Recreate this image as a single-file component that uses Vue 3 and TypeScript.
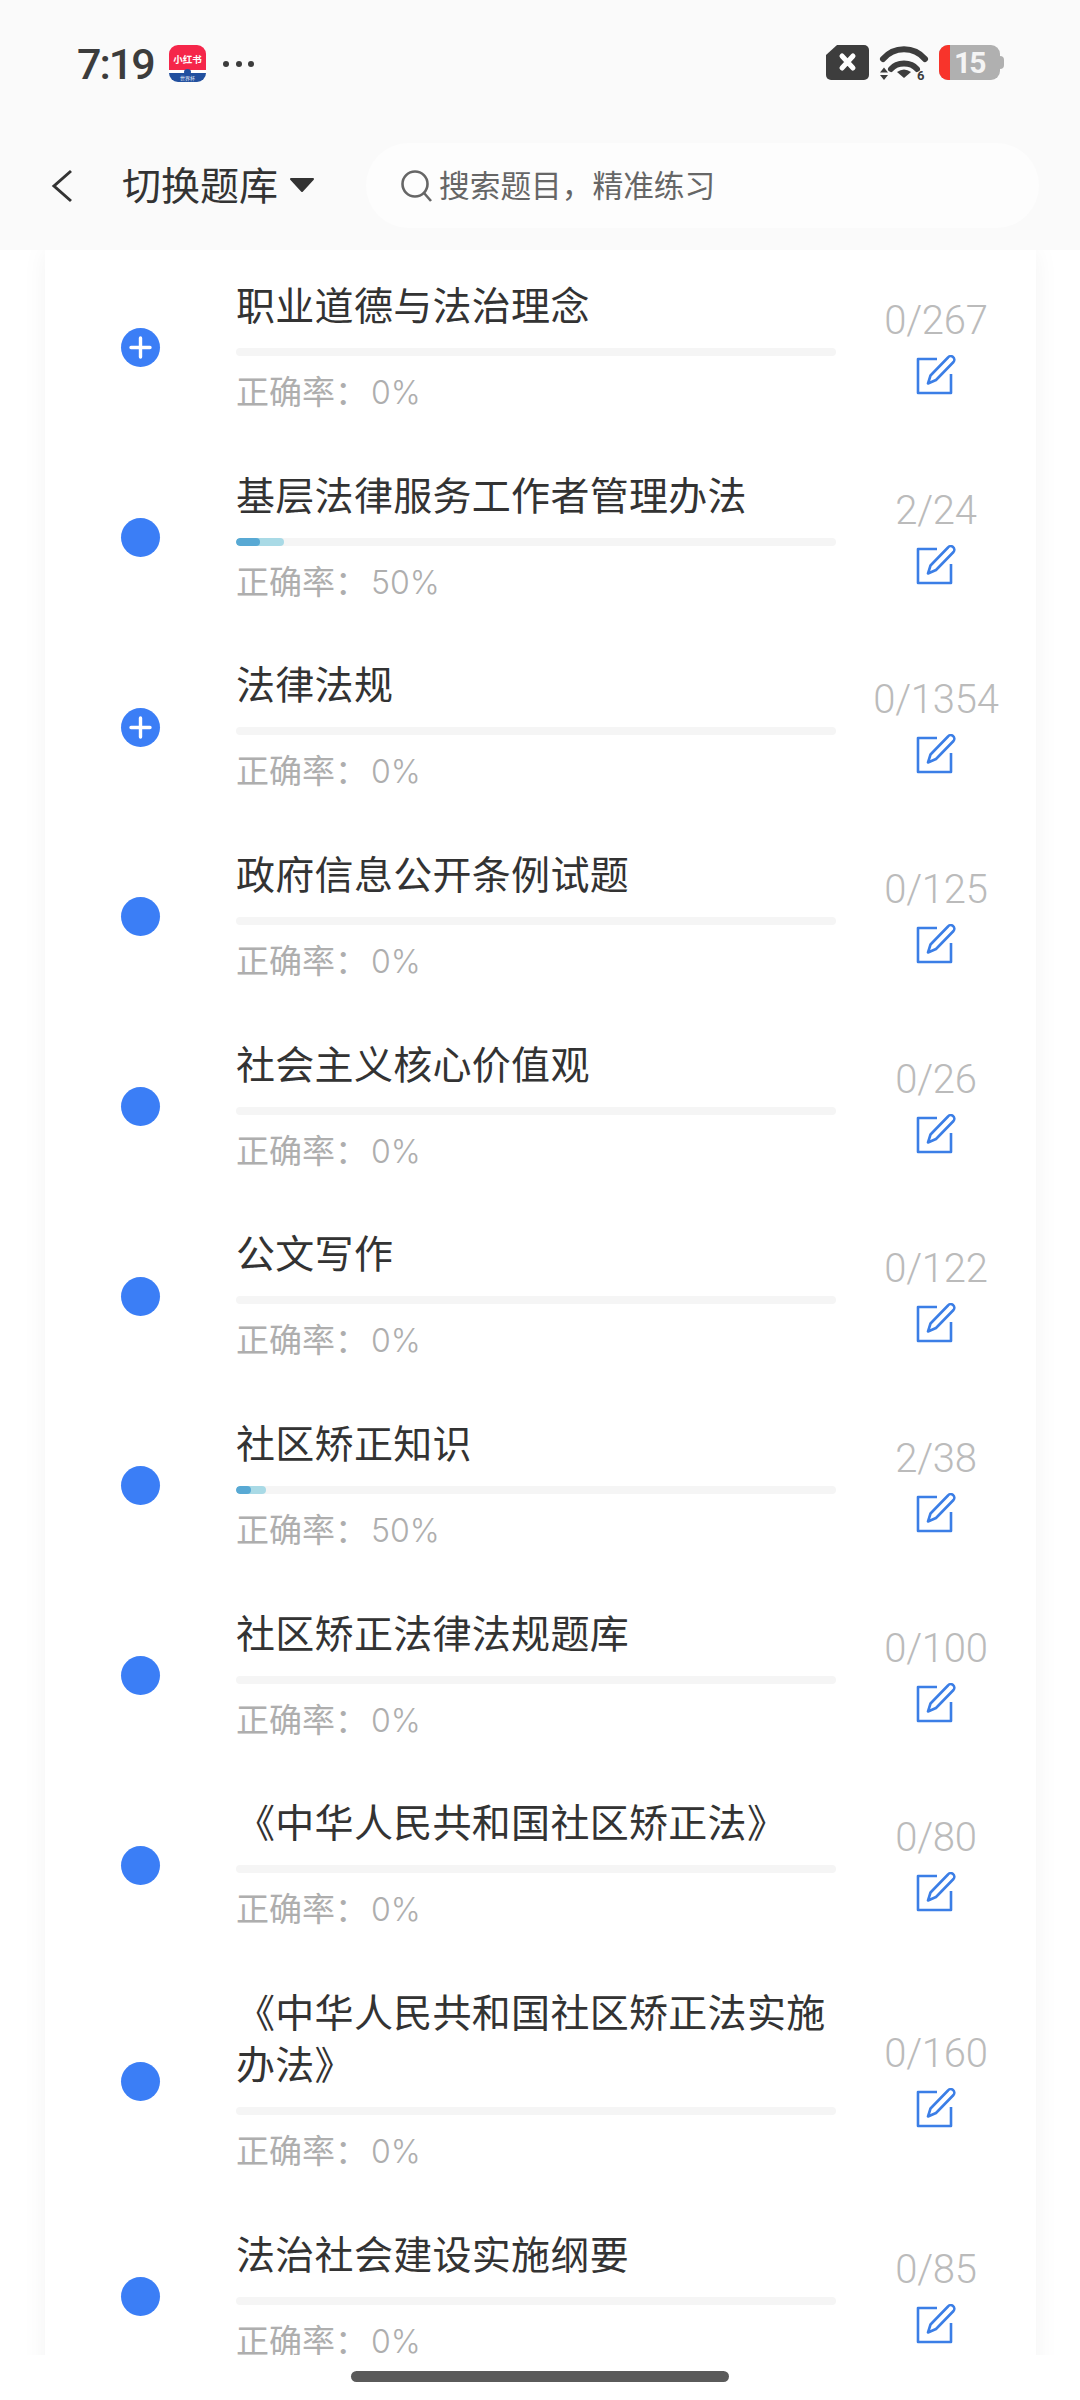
<template>
  <div class="page">
    <div class="topbar">
      <div class="status">
        <div class="status-left">
          <span class="time">7:19</span>
          <div class="app-icon">
            <span class="app-name">小红书</span>
            <span class="app-ball"></span>
            <span class="app-sub">世界杯</span>
          </div>
          <span class="more"><i></i><i></i><i></i></span>
        </div>
        <div class="status-right">
          <svg width="43" height="36" viewBox="0 0 43 36">
            <path d="M11 0H38a5 5 0 0 1 5 5V30a5 5 0 0 1-5 5H5a5 5 0 0 1-5-5V10Z" fill="#3d3d3d" />
            <path d="M16 11l11 12M27 11L16 23" stroke="#fff" stroke-width="5" stroke-linecap="round" />
          </svg>
          <svg class="wifi" width="48" height="36" viewBox="0 0 48 36">
            <path d="M3 14C14 1 34 1 45 14" fill="none" stroke="#3d3d3d" stroke-width="6" stroke-linecap="round" />
            <path d="M11 24C17 16.500 31 16.500 37 24" fill="none" stroke="#3d3d3d" stroke-width="6" stroke-linecap="round" />
            <path d="M17 27q7-5 14 0l-7 6Z" fill="#3d3d3d" />
            <path d="M0 27.500l4-5 4 5ZM0 30l4 5 4-5Z" fill="#3d3d3d" />
            <text x="37" y="35" class="wifi-six">6</text>
          </svg>
          <div class="battery">
            <div class="battery-low"></div>
            <span>15</span>
          </div>
        </div>
      </div>
      <div class="nav">
        <svg class="back" width="22" height="34" viewBox="0 0 22 34">
          <path d="M20 2L3 17l17 15" fill="none" stroke="#333" stroke-width="3" />
        </svg>
        <span class="nav-title">切换题库</span>
        <svg class="caret" width="26" height="16" viewBox="0 0 26 16">
          <path d="M2 2h22L13 14Z" fill="#333" stroke="#333" stroke-width="2" stroke-linejoin="round" />
        </svg>
        <div class="search">
          <svg width="34" height="34" viewBox="0 0 34 34">
            <circle cx="16" cy="15" r="12.500" fill="none" stroke="#666" stroke-width="2.600" />
            <path d="M25 24l7 8" stroke="#666" stroke-width="2.600" />
          </svg>
          <span class="search-text">搜索题目，精准练习</span>
        </div>
      </div>
    </div>

    <div class="main">
      <div class="card">
        <div v-for="item in items" :key="item.title" class="row">
          <div class="dot">
            <svg v-if="item.plus" width="39" height="39" viewBox="0 0 39 39">
              <path d="M10 19.500h19M19.500 10v19" stroke="#fff" stroke-width="3.400" stroke-linecap="round" />
            </svg>
          </div>
          <div class="info">
            <div class="title">{{ item.title }}</div>
            <div class="bar">
              <div class="bar-total" :style="{ width: item.total + '%' }">
                <div class="bar-right" :style="{ width: item.right + '%' }"></div>
              </div>
            </div>
            <div class="rate">正确率：<span class="rate-num">{{ item.rate }}</span></div>
          </div>
          <div class="side">
            <div class="count">{{ item.count }}</div>
            <svg width="40" height="40" viewBox="0 0 40 40">
              <path d="M21 4H2v34h33V19" fill="none" stroke="#3b7ee6" stroke-width="2.600" stroke-linejoin="round" />
              <path d="M12 28.500l2.500-8L32 2.500a3.400 3.400 0 0 1 5.500 4.500L20 25Z" fill="none" stroke="#3b7ee6" stroke-width="2.600" stroke-linejoin="round" />
            </svg>
          </div>
        </div>
      </div>
    </div>

    <div class="footer"><div class="indicator"></div></div>
  </div>
</template>

<script setup lang="ts">
interface Item {
  title: string
  count: string
  rate: string
  plus?: boolean
  total: number
  right: number
}

const items: Item[] = [
  { title: '职业道德与法治理念', count: '0/267', rate: '0%', plus: true, total: 0, right: 0 },
  { title: '基层法律服务工作者管理办法', count: '2/24', rate: '50%', total: 8, right: 50 },
  { title: '法律法规', count: '0/1354', rate: '0%', plus: true, total: 0, right: 0 },
  { title: '政府信息公开条例试题', count: '0/125', rate: '0%', total: 0, right: 0 },
  { title: '社会主义核心价值观', count: '0/26', rate: '0%', total: 0, right: 0 },
  { title: '公文写作', count: '0/122', rate: '0%', total: 0, right: 0 },
  { title: '社区矫正知识', count: '2/38', rate: '50%', total: 5, right: 50 },
  { title: '社区矫正法律法规题库', count: '0/100', rate: '0%', total: 0, right: 0 },
  { title: '《中华人民共和国社区矫正法》', count: '0/80', rate: '0%', total: 0, right: 0 },
  { title: '《中华人民共和国社区矫正法实施办法》', count: '0/160', rate: '0%', total: 0, right: 0 },
  { title: '法治社会建设实施纲要', count: '0/85', rate: '0%', total: 0, right: 0 },
]
</script>

<style>
html, body { margin: 0; background: #fff; }
</style>

<style scoped>
.page {
  width: 1080px;
  height: 2400px;
  display: flex;
  flex-direction: column;
  overflow: hidden;
  background: #fff;
  font-family: "Noto Sans CJK SC", "Noto Sans", sans-serif;
}
.topbar {
  flex: none;
  height: 250px;
  background: #fafafa;
  position: relative;
  z-index: 2;
}
.status {
  height: 143px;
  box-sizing: border-box;
  padding: 45px 80px 0 77px;
  display: flex;
  justify-content: space-between;
  align-items: flex-start;
}
.status-left {
  display: flex;
  align-items: center;
  height: 37px;
}
.time {
  font-family: Roboto, sans-serif;
  font-size: 43px;
  font-weight: 500;
  letter-spacing: -2px;
  color: #3c3c3c;
  width: 92px;
}
.app-icon {
  width: 37px;
  height: 37px;
  border-radius: 9px;
  overflow: hidden;
  position: relative;
  background: linear-gradient(#f5264a 0 68%, #fff 68% 76%, #22509f 76%);
  display: flex;
  flex-direction: column;
  align-items: center;
}
.app-name {
  font-size: 9.500px;
  line-height: 10px;
  margin-top: 9px;
  font-weight: 700;
  color: #fff;
  white-space: nowrap;
}
.app-ball {
  position: absolute;
  left: 15px;
  top: 24px;
  width: 7px;
  height: 6px;
  border-radius: 50%;
  background: #22509f;
}
.app-sub {
  position: absolute;
  top: 30px;
  font-size: 5px;
  line-height: 6px;
  color: #e6edf8;
  white-space: nowrap;
}
.more {
  display: flex;
  gap: 6.500px;
  margin-left: 17px;
}
.more i {
  width: 6px;
  height: 6px;
  border-radius: 50%;
  background: #3c3c3c;
}
.status-right {
  display: flex;
  align-items: flex-start;
  gap: 11px;
}
.wifi { overflow: visible; }
.wifi-six {
  font-family: Roboto, sans-serif;
  font-size: 13px;
  font-weight: 700;
  fill: #3d3d3d;
}
.battery {
  width: 61px;
  height: 35px;
  border-radius: 9px;
  background: #b0b0b0;
  position: relative;
  display: flex;
  align-items: center;
  font-family: Roboto, sans-serif;
  font-size: 30px;
  font-weight: 700;
  letter-spacing: -2px;
  color: #f4f4f4;
}
.battery::after {
  content: "";
  position: absolute;
  right: -4px;
  top: 11px;
  width: 4px;
  height: 13px;
  border-radius: 0 4px 4px 0;
  background: #b0b0b0;
}
.battery-low {
  width: 11px;
  height: 35px;
  border-radius: 9px 0 0 9px;
  background: #f8342b;
  margin-right: 4px;
}
.nav {
  height: 85px;
  display: flex;
  align-items: center;
  padding-left: 51px;
}
.back { flex: none; }
.nav-title {
  margin-left: 49px;
  margin-top: -6px;
  font-size: 39px;
  line-height: 52px;
  color: #333;
  white-space: nowrap;
}
.caret {
  flex: none;
  margin-left: 11px;
  margin-top: -2px;
}
.search {
  margin-left: 51px;
  width: 673px;
  height: 85px;
  box-sizing: border-box;
  border-radius: 43px;
  background: #fdfdfd;
  display: flex;
  align-items: center;
  padding-left: 33px;
  gap: 6px;
  font-size: 30.700px;
  color: #666;
}
.search-text { margin-top: -4px; }
.main {
  flex: 1;
  min-height: 0;
  overflow: hidden;
  padding: 0 44px 0 45px;
}
.card {
  background: #fff;
  padding-top: 3px;
  box-shadow: 0 0 24px rgba(0, 0, 0, 0.05);
}
.row {
  display: grid;
  grid-template-columns: 191px 600px 1fr;
  align-items: center;
  padding: 26.850px 0;
}
.dot {
  justify-self: center;
  margin-left: -1px;
  width: 39px;
  height: 39px;
  border-radius: 50%;
  background: #3b7ef6;
}
.dot svg { display: block; }
.title {
  margin-top: -3px;
  font-size: 39px;
  letter-spacing: 0.300px;
  line-height: 52px;
  color: #333;
}
.bar {
  margin-top: 19px;
  height: 8px;
  border-radius: 4px;
  background: #f5f5f5;
  overflow: hidden;
}
.bar-total {
  height: 100%;
  border-radius: 4px;
  background: #a9dae6;
  overflow: hidden;
}
.bar-right {
  height: 100%;
  border-radius: 4px;
  background: #58a9d4;
}
.rate {
  margin-top: 10px;
  height: 50px;
  font-size: 33px;
  line-height: 48px;
  color: #aeaeae;
}
.rate-num {
  margin-left: 3px;
  font-family: Inter, sans-serif;
  font-weight: 300;
  font-size: 32px;
}
.side {
  display: flex;
  flex-direction: column;
  align-items: center;
  gap: 11px;
  padding-bottom: 3px;
}
.count {
  font-family: Roboto, sans-serif;
  font-weight: 300;
  font-size: 40px;
  letter-spacing: -0.200px;
  line-height: 46px;
  color: #bbb;
}
.side svg { display: block; }
.footer {
  flex: none;
  height: 45px;
  background: #fff;
  position: relative;
  display: flex;
  justify-content: center;
  padding-top: 16px;
  box-sizing: border-box;
}
.indicator {
  width: 378px;
  height: 11px;
  border-radius: 6px;
  background: #5a5a5a;
}
</style>
